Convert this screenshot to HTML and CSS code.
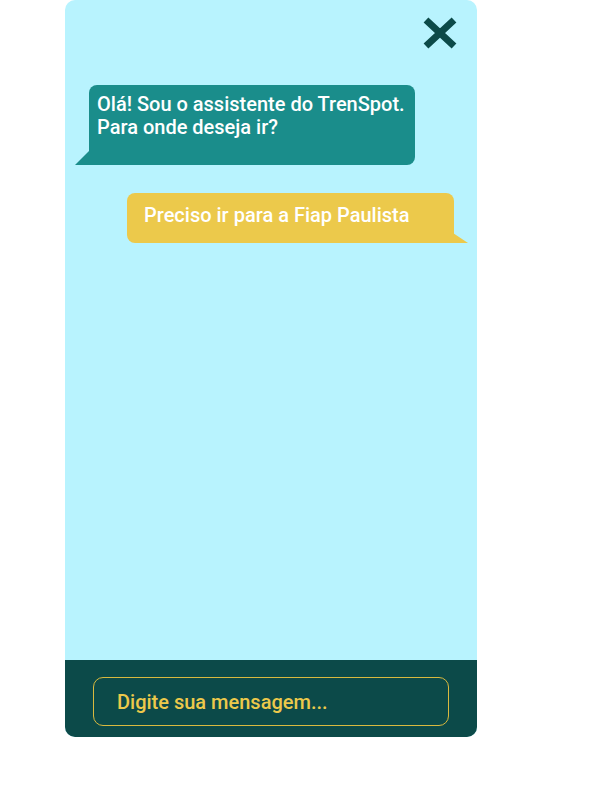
FILE: index.html
```html
<!DOCTYPE html>
<html lang="pt-BR">
<head>
<meta charset="utf-8">
<title>TrenSpot Chat</title>
<link rel="stylesheet" href="styles.css">
</head>
<body>
<div class="chat">
  <div class="chat-body">
    <div class="close-row">
      <button class="close" aria-label="Fechar">
        <svg width="36" height="32" viewBox="0 0 36 32"><path d="M4 3 L32 29 M32 3 L4 29" stroke="#0c4a49" stroke-width="7" fill="none"/></svg>
      </button>
    </div>
    <div class="msg bot">Olá! Sou o assistente do TrenSpot.<br>Para onde deseja ir?</div>
    <div class="msg user">Preciso ir para a Fiap Paulista</div>
  </div>
  <div class="chat-footer">
    <div class="input">Digite sua mensagem...</div>
  </div>
</div>
</body>
</html>
```
FILE: styles.css
```css
html, body { margin: 0; padding: 0; background: #ffffff; }
body { font-family: Roboto, "Noto Sans", sans-serif; }
.chat {
  margin-left: 65px;
  width: 412px;
  height: 737px;
  display: flex;
  flex-direction: column;
  border-radius: 10px;
  overflow: hidden;
  background: #b8f3fe;
}
.chat-body {
  flex: 1;
  display: flex;
  flex-direction: column;
  padding: 17px 0 0 0;
}
.close-row { display: flex; justify-content: flex-end; padding-right: 19px; height: 68px; }
.close { background: none; border: 0; padding: 0; width: 36px; height: 32px; cursor: pointer; }
.close svg { display: block; }
.msg {
  position: relative;
  width: 326px;
  box-sizing: border-box;
  color: #ffffff;
  font-size: 20px;
  font-weight: 500;
  line-height: 23px;
  border-radius: 8px;
  white-space: nowrap;
}
.bot {
  margin-left: 24px;
  height: 80px;
  padding: 8px 8px;
  background: #1a8d8b;
  border-bottom-left-radius: 0;
}
.bot::after {
  content: "";
  position: absolute;
  left: -14px;
  bottom: 0;
  border-style: solid;
  border-width: 0 0 15px 15px;
  border-color: transparent transparent #1a8d8b transparent;
}
.user {
  margin-left: 62px;
  margin-top: 28px;
  width: 327px;
  height: 50px;
  padding: 11px 17px;
  background: #ecc94b;
  border-bottom-right-radius: 0;
}
.user::after {
  content: "";
  position: absolute;
  right: -14px;
  bottom: 0;
  border-style: solid;
  border-width: 0 15px 10px 0;
  border-color: transparent transparent #ecc94b transparent;
}
.chat-footer {
  height: 77px;
  box-sizing: border-box;
  background: #0c4a49;
  padding: 17px 28px 0 28px;
}
.input {
  width: 356px;
  height: 49px;
  box-sizing: border-box;
  border: 1px solid #d9b93f;
  border-radius: 10px;
  padding-left: 23px;
  display: flex;
  align-items: center;
  color: #ecc94b;
  font-size: 20px;
  font-weight: 500;
}
```
